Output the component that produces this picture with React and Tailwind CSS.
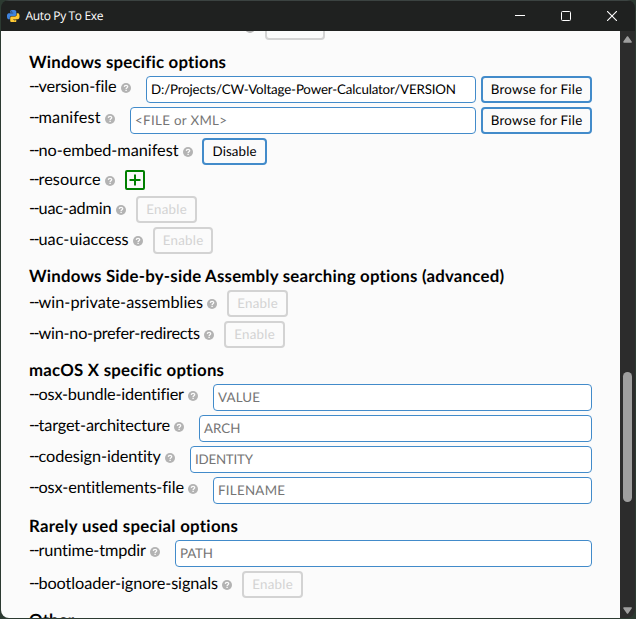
import { useLayoutEffect, useRef } from "react";

// Text set to an exact advance width by distributing letter spacing.
function Fit({ w, children, className = "" }) {
  const ref = useRef(null);
  useLayoutEffect(() => {
    const el = ref.current;
    el.style.letterSpacing = "0px";
    const natural = el.getBoundingClientRect().width;
    el.style.letterSpacing = `${(w - natural) / (children.length - 1)}px`;
  }, [w, children]);
  return (
    <span className={`inline-block shrink-0 whitespace-nowrap ${className}`} style={{ width: w }}>
      <span ref={ref} className="inline-block [font-variant-ligatures:none] [text-rendering:geometricPrecision]">
        {children}
      </span>
    </span>
  );
}

function Help() {
  return (
    <svg viewBox="0 0 10 10" className="ml-[4px] size-[10px] shrink-0">
      <circle cx="5" cy="5" r="5" fill="#b3b3b3" />
      <path d="M3.3 3.9C3.4 1.7 6.8 1.8 6.7 3.8C6.6 4.8 5.2 4.8 5.1 6" fill="none" stroke="#fbfbfb" strokeWidth="1.3" />
      <path d="M4.4 6.8h1.4v1.3H4.4z" fill="#fbfbfb" />
    </svg>
  );
}

function Label({ name, w, className }) {
  return (
    <div className={`flex h-5 shrink-0 items-center ${className}`}>
      <div className="flex shrink-0 text-[16.3px] leading-5">
        <span className="block w-[9.5px] shrink-0 tracking-[-1.6px] whitespace-nowrap">--</span>
        <Fit w={w - 9.5}>{name}</Fit>
      </div>
      <div className="pt-[3px]"><Help /></div>
    </div>
  );
}

function Field({ value, w, placeholder }) {
  return (
    <div className="flex h-[27px] min-w-0 grow items-center rounded-[4px] border border-[#428bca] bg-white pb-px pl-1">
      <Fit w={w} className={placeholder ? "text-[13.33px] leading-5 text-[#757575]" : "text-[13.33px] leading-5 text-black"}>
        {value}
      </Fit>
    </div>
  );
}

function Button({ text, w, className }) {
  return (
    <div className={`flex h-[27px] shrink-0 items-center justify-center rounded-[4px] border-2 pb-px ${className}`}>
      {text && <Fit w={w} className="text-[13.33px] leading-5">{text}</Fit>}
    </div>
  );
}

const OFF = "border-[#d3d3d3] text-[#d3d3d3]";

function InputRow({ name, lw, col, value, vw, placeholder = true, browse }) {
  return (
    <div className="flex h-[27px]">
      <Label name={name} w={lw} className={col} />
      <Field value={value} w={vw} placeholder={placeholder} />
      {browse && <Button text="Browse for File" w={91.5} className="ml-[5px] w-[111px] border-[#428bca] text-black" />}
    </div>
  );
}

function ToggleRow({ name, lw, col, size = "w-[61px]", on }) {
  return (
    <div className="flex h-[27px]">
      <Label name={name} w={lw} className={`mt-[2px] ${col}`} />
      {on ? (
        <Button text="Disable" w={44} className="w-[65px] border-[#428bca] text-black" />
      ) : (
        <Button text="Enable" w={40.5} className={`${size} ${OFF}`} />
      )}
    </div>
  );
}

function Section({ title, w, children }) {
  return (
    <section>
      <h2 className="flex h-9 items-end pb-[2px] font-bold">
        <Fit w={w} className="text-[16.8px] leading-6">{title}</Fit>
      </h2>
      <div className="flex flex-col gap-1">{children}</div>
    </section>
  );
}

function TitleBar() {
  return (
    <header className="flex h-[31px] shrink-0 items-center border-t border-[#3b4341] bg-[#1f2120] pl-[6px] text-white">
      <svg viewBox="0 0 24 24" className="size-[12.5px] shrink-0">
        <path fill="#3f82dc" d="M14.25.18l.9.2.73.26.59.3.45.32.34.34.25.34.16.33.1.3.04.26.02.2-.01.13V8.5l-.05.63-.13.55-.21.46-.26.38-.3.31-.33.25-.35.19-.35.14-.33.1-.3.07-.26.04-.21.02H8.77l-.69.05-.59.14-.5.22-.41.27-.33.32-.27.35-.2.36-.15.37-.1.35-.07.32-.04.27-.02.21v3.06H3.17l-.21-.03-.28-.07-.32-.12-.35-.18-.36-.26-.36-.36-.35-.46-.32-.59-.28-.73-.21-.88-.14-1.05-.05-1.23.06-1.22.16-1.04.24-.87.32-.71.36-.57.4-.44.42-.33.42-.24.4-.16.36-.1.32-.05.24-.01h8.38v-.83H6.18l-.01-2.75-.02-.37.05-.34.11-.31.17-.28.25-.26.31-.23.38-.2.44-.18.51-.15.58-.12.64-.1.71-.06.77-.04.84-.02 1.27.05z" />
        <path fill="#ffca35" d="M21.04 6.11l.28.06.32.12.35.18.36.27.36.35.35.47.32.59.28.73.21.88.14 1.04.05 1.23-.06 1.23-.16 1.04-.24.86-.32.71-.36.57-.4.45-.42.33-.42.24-.4.16-.36.09-.32.05-.24.02-.16-.01h-8.22v.82h5.84l.01 2.76.02.36-.05.34-.11.31-.17.29-.25.25-.31.24-.38.2-.44.17-.51.15-.58.13-.64.09-.71.07-.77.04-.84.01-1.27-.04-1.07-.14-.9-.2-.73-.25-.59-.3-.45-.33-.34-.34-.25-.34-.16-.33-.1-.3-.04-.25-.02-.2.01-.13v-5.34l.05-.64.13-.54.21-.46.26-.38.3-.32.33-.24.35-.2.35-.14.33-.1.3-.06.26-.04.21-.02.13-.01h5.84l.69-.05.59-.14.5-.21.41-.28.33-.32.27-.35.2-.36.15-.36.1-.35.07-.32.04-.28.02-.21V6.07h2.09z" />
        <circle cx="9" cy="3.3" r=".9" fill="#1f2120" />
        <circle cx="15" cy="20.7" r=".9" fill="#1f2120" />
      </svg>
      <Fit w={78} className="ml-[6px] font-['Open_Sans','Noto_Sans',sans-serif] text-[12px] leading-4">Auto Py To Exe</Fit>
      <div className="ml-auto flex items-center gap-9 pr-[18px]">
        <svg viewBox="0 0 10 10" className="size-[10px]"><path d="M0 4.5h10" stroke="white" /></svg>
        <svg viewBox="0 0 10 10" className="size-[10px]"><rect x=".5" y=".5" width="9" height="9" rx="1" fill="none" stroke="white" /></svg>
        <svg viewBox="0 0 10 10" className="size-[10px]"><path d="M0 0l10 10M10 0L0 10" stroke="white" strokeWidth="1.1" /></svg>
      </div>
    </header>
  );
}

function Scrollbar() {
  return (
    <div className="flex w-[15px] shrink-0 flex-col items-center rounded-br-lg bg-[#2c2c2c]">
      <svg viewBox="0 0 9 7" className="mt-[5px] h-[7px] w-[9px]"><path d="M4.5 1L8 6H1z" fill="#9f9f9f" stroke="#9f9f9f" strokeWidth="1.6" strokeLinejoin="round" /></svg>
      <div className="mt-[329px] h-[130px] w-[9px] rounded-full bg-[#9f9f9f]" />
      <svg viewBox="0 0 9 7" className="mt-auto mb-[4px] h-[7px] w-[9px]"><path d="M4.5 6L8 1H1z" fill="#9f9f9f" stroke="#9f9f9f" strokeWidth="1.6" strokeLinejoin="round" /></svg>
    </div>
  );
}

export default function App() {
  return (
    <div className="h-[619px] w-[636px] overflow-hidden bg-[#2c3a31] pr-px pb-px pl-px font-[Lato,'Noto_Sans',sans-serif] text-black">
      <div className="flex h-full flex-col overflow-hidden rounded-lg">
        <TitleBar />
        <div className="flex min-h-0 grow">
          <main className="min-w-0 grow overflow-hidden bg-[#fbfbfb] pr-[28px] pl-[28px]">
            <div className="flex h-[9px] items-end overflow-hidden pl-[216px]">
              <div className="mb-[7px] size-[10px] shrink-0 rounded-full bg-[#b3b3b3]" />
              <Button className="ml-[10px] w-[60px] border-[#d3d3d3]" />
            </div>
            <Section title="Windows specific options" w={197}>
              <InputRow name="version-file" lw={87.5} col="w-[117px]" value="D:/Projects/CW-Voltage-Power-Calculator/VERSION" vw={305} placeholder={false} browse />
              <InputRow name="manifest" lw={71.5} col="w-[101px]" value="<FILE or XML>" vw={92} browse />
              <ToggleRow name="no-embed-manifest" lw={149.5} col="w-[173px]" on />
              <div className="mt-px mb-[2px] flex h-5 items-center">
                <Label name="resource" w={71.5} className="w-[96px] pb-[2px]" />
                <svg viewBox="0 0 20 20" className="size-5">
                  <rect x="1" y="1" width="18" height="18" rx="1" fill="none" stroke="#008000" strokeWidth="2" />
                  <path d="M10 4.5v11M4.5 10h11" stroke="#008000" strokeWidth="2" />
                </svg>
              </div>
              <ToggleRow name="uac-admin" lw={82.5} col="w-[107px]" />
              <ToggleRow name="uac-uiaccess" lw={99.5} col="w-[124px]" size="w-[60px]" />
            </Section>
            <Section title="Windows Side-by-side Assembly searching options (advanced)" w={475}>
              <ToggleRow name="win-private-assemblies" lw={174} col="w-[198px]" />
              <ToggleRow name="win-no-prefer-redirects" lw={171} col="w-[195px]" />
            </Section>
            <Section title="macOS X specific options" w={195}>
              <InputRow name="osx-bundle-identifier" lw={155} col="w-[184px]" value="VALUE" vw={42} />
              <InputRow name="target-architecture" lw={141} col="w-[170px]" value="ARCH" vw={36.5} />
              <InputRow name="codesign-identity" lw={132} col="w-[161px]" value="IDENTITY" vw={58} />
              <InputRow name="osx-entitlements-file" lw={155} col="w-[184px]" value="FILENAME" vw={67} />
            </Section>
            <Section title="Rarely used special options" w={209}>
              <InputRow name="runtime-tmpdir" lw={117} col="w-[146px]" value="PATH" vw={33} />
              <ToggleRow name="bootloader-ignore-signals" lw={189} col="w-[213px]" />
            </Section>
            <Section title="Other" w={45} />
          </main>
          <Scrollbar />
        </div>
      </div>
    </div>
  );
}
